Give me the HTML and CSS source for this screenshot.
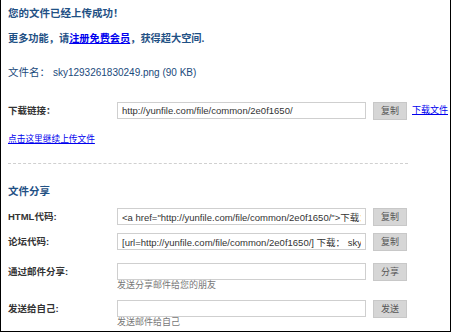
FILE: index.html
```html
<!DOCTYPE html>
<html lang="zh-CN">
<head>
    <meta charset="UTF-8">
    <title>上传成功</title>
    <link rel="stylesheet" href="styles.css">
</head>
<body>
    <div class="panel">
        <h1 class="done">您的文件已经上传成功！</h1>
        <p class="more">更多功能，请<a href="#">注册免费会员</a>，获得超大空间.</p>
        <p class="fname">文件名： <span class="latin">sky1293261830249.png (90 KB)</span></p>

        <div class="row first">
            <label class="lbl">下载链接：</label>
            <div class="field"><input type="text" value="http://yunfile.com/file/common/2e0f1650/"></div>
            <button class="btn">复制</button>
            <a class="dl" href="#">下载文件</a>
        </div>

        <a class="again" href="#">点击这里继续上传文件</a>

        <div class="sep"></div>

        <h2 class="share">文件分享</h2>

        <div class="row html">
            <label class="lbl">HTML代码:</label>
            <div class="field"><input type="text" value='<a href="http://yunfile.com/file/common/2e0f1650/">下载：sky1293261830249.png</a>'></div>
            <button class="btn">复制</button>
        </div>
        <div class="row forum">
            <label class="lbl">论坛代码:</label>
            <div class="field"><input type="text" value="[url=http://yunfile.com/file/common/2e0f1650/] 下载： sky1293261830249.png[/url]"></div>
            <button class="btn">复制</button>
        </div>
        <div class="row mail">
            <label class="lbl">通过邮件分享:</label>
            <div class="field">
                <input type="text" value="">
                <div class="hint">发送分享邮件给您的朋友</div>
            </div>
            <button class="btn">分享</button>
        </div>
        <div class="row self">
            <label class="lbl">发送给自己:</label>
            <div class="field">
                <input type="text" value="">
                <div class="hint">发送邮件给自己</div>
            </div>
            <button class="btn">发送</button>
        </div>
    </div>
</body>
</html>
```

FILE: styles.css
```css
body {
    margin: 0;
    padding: 0;
    background: #fff;
    font-family: "Liberation Sans", "Noto Sans CJK SC", sans-serif;
}
.panel {
    box-sizing: border-box;
    width: 451px;
    height: 332px;
    border: 1px solid #000;
    border-top: none;
    padding: 6px 0 0 7px;
    overflow: hidden;
}
.done {
    margin: 0;
    font-size: 10.5px;
    line-height: 14px;
    font-weight: bold;
    color: #1f5185;
}
.more {
    margin: 12px 0 0;
    font-size: 10.2px;
    line-height: 14px;
    font-weight: bold;
    color: #1f5185;
}
.more a {
    color: #0000ee;
}
.fname {
    margin: 19px 0 0;
    font-size: 10.5px;
    line-height: 14px;
    color: #1a4a7c;
}
.fname .latin {
    font-size: 10px;
}
.row {
    display: flex;
    align-items: flex-start;
}
.row.first {
    margin-top: 22px;
}
.row.html {
    margin-top: 10px;
}
.row.forum {
    margin-top: 7px;
}
.row.mail {
    margin-top: 12px;
}
.row.self {
    margin-top: 9px;
}
.lbl {
    width: 109px;
    flex: none;
    font-size: 9.5px;
    line-height: 17px;
    font-weight: bold;
    color: #333;
}
.field {
    width: 249px;
    flex: none;
}
.field input {
    box-sizing: border-box;
    display: block;
    width: 249px;
    height: 17px;
    margin: 0;
    padding: 0 4px;
    border: 1px solid #cfcfcf;
    font-family: "Liberation Sans", "Noto Sans CJK SC", sans-serif;
    font-size: 9.5px;
    color: #333;
    background: #fff;
}
.hint {
    font-size: 9px;
    line-height: 11px;
    color: #777;
}
.btn {
    box-sizing: border-box;
    width: 34px;
    height: 18px;
    margin: 0 0 0 7px;
    padding: 0;
    border: 1px solid #c8c8c8;
    background: #d6d6d6;
    color: #555;
    font-family: "Noto Sans CJK SC", sans-serif;
    font-size: 9px;
    line-height: 16px;
}
.dl {
    margin-left: 5px;
    font-size: 9px;
    line-height: 17px;
    color: #0000ee;
}
.again {
    display: block;
    width: max-content;
    margin-top: 13px;
    font-size: 8.7px;
    line-height: 12px;
    color: #0000ee;
}
.sep {
    width: 400px;
    margin-top: 18px;
    border-top: 1px dashed #d0d0d0;
}
.share {
    margin: 20px 0 0;
    font-size: 10.5px;
    line-height: 14px;
    font-weight: bold;
    color: #1f5185;
}
```
